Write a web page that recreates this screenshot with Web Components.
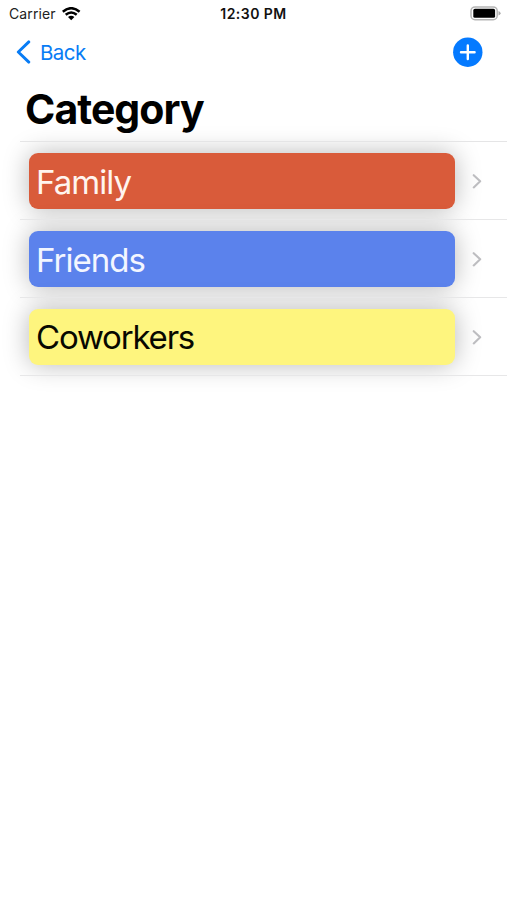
<!DOCTYPE html>
<html lang="en">
<head>
<meta charset="utf-8">
<title>Category</title>
<style>
    body {
        margin: 0;
        background: #fff;
        color: #000;
        font-family: Inter, "Liberation Sans", sans-serif;
    }
</style>
</head>
<body>
<category-screen>
    <status-bar carrier="Carrier">12:30 PM</status-bar>
    <nav-bar>Back</nav-bar>
    <large-title>Category</large-title>
    <category-list>
        <category-row style="--color-card: #d95b3a; --color-label: #fff5ef; --track: -0.95px">Family</category-row>
        <category-row style="--color-card: #5b82ec; --color-label: #f3f6ff; --track: -1px">Friends</category-row>
        <category-row style="--color-card: #fef57e; --color-label: #080800; --track: -1.2px; --leading: 56px">Coworkers</category-row>
    </category-list>
</category-screen>

<script>
function define(name, html) {
    const template = document.createElement('template');
    template.innerHTML = html;

    customElements.define(name, class extends HTMLElement {
        constructor() {
            super();

            this.attachShadow({mode: "open"});

            this.shadowRoot.appendChild(template.content.cloneNode(true));
        }

        connectedCallback() {
            const carrier = this.shadowRoot.querySelector('[data-carrier]');
            if (carrier) carrier.textContent = this.getAttribute('carrier');
        }
    });
}

define('category-screen', /*html*/ `
    <style>
        :host {
            display: flex;
            flex-direction: column;
            width: 507px;
            height: 900px;
            overflow: hidden;
        }
    </style>
    <slot></slot>
`);

define('status-bar', /*html*/ `
    <style>
        :host {
            display: grid;
            grid-template-columns: 1fr auto 1fr;
            align-items: center;
            box-sizing: border-box;
            height: 27px;
            padding: 0 6px 0 9px;
            line-height: 27px;
        }

        .status__carrier {
            display: flex;
            align-items: center;
            gap: 6px;
            font-size: 14px;
            letter-spacing: 0.1px;
            color: #222;
        }

        .status__time {
            margin-right: 3px;
            font-size: 14px;
            font-weight: 600;
            letter-spacing: 0.45px;
            color: #111;
        }

        .status__battery {
            justify-self: end;
        }

        svg {
            display: block;
        }
    </style>
    <div class="status__carrier">
        <span data-carrier></span>
        <svg width="19" height="14" viewBox="0 0 19 14" fill="none" stroke="#000" stroke-width="2.5">
            <path d="M.8 4.7Q9.2-2.3 17.6 4.7M3.7 7.8Q9.2 3.1 14.7 7.8"/>
            <path d="M6 10.1Q9.2 7.6 12.4 10.1L9.2 13.2Z" fill="#000" stroke="none"/>
        </svg>
    </div>
    <div class="status__time"><slot></slot></div>
    <svg class="status__battery" width="31" height="15" viewBox="0 0 31 15">
        <rect x="1" y=".9" width="26.2" height="12.8" rx="4" fill="#fff" stroke="#b5b5b5" stroke-width="1.5"/>
        <rect x="3.3" y="2.8" width="21.8" height="9" rx="1.6" fill="#000"/>
        <path d="M28.5 5Q30.6 5.8 30.6 7.3T28.5 9.6Z" fill="#aaa"/>
    </svg>
`);

define('nav-bar', /*html*/ `
    <style>
        :host {
            display: flex;
            align-items: center;
            justify-content: space-between;
            box-sizing: border-box;
            height: 50px;
            padding: 0 24px 0 16px;
            color: #087cf5;
        }

        .nav__back {
            display: flex;
            align-items: center;
            gap: 9px;
            font-size: 20.5px;
            letter-spacing: -0.55px;
        }

        svg {
            display: block;
        }
    </style>
    <div class="nav__back">
        <svg width="15" height="24" viewBox="0 0 15 24" fill="none" stroke="currentColor" stroke-width="2.9" stroke-linecap="round" stroke-linejoin="round">
            <path d="M12.8 1.9L2.3 12L12.8 22.1"/>
        </svg>
        <slot></slot>
    </div>
    <svg width="31" height="30" viewBox="0 0 31 30">
        <circle cx="15.8" cy="15.2" r="14.7" fill="#057aff"/>
        <path d="M9 15.2H22.6M15.8 8.4V22" stroke="#fff" stroke-width="2.4" stroke-linecap="round"/>
    </svg>
`);

define('large-title', /*html*/ `
    <style>
        :host {
            display: block;
            box-sizing: border-box;
            height: 64px;
            padding-left: 25px;
            font-size: 41px;
            font-weight: 700;
            line-height: 64px;
            letter-spacing: -0.95px;
        }
    </style>
    <slot></slot>
`);

define('category-list', /*html*/ `
    <style>
        :host {
            display: block;
            margin-left: 20px;
        }

        /* lines stay above the card shadows */
        .list__line {
            position: relative;
            z-index: 1;
            height: 1px;
            background: #e5e5e6;
        }
    </style>
    <div class="list__line"></div>
    <slot></slot>
`);

define('category-row', /*html*/ `
    <style>
        .row__content {
            display: flex;
            align-items: center;
            height: 77px;
            padding: 0 24px 0 9px;
        }

        .row__line {
            position: relative;
            z-index: 1;
            height: 1px;
            background: #e7e7e8;
        }

        :host {
            display: block;
        }

        .row__card {
            flex: none;
            box-sizing: border-box;
            width: 426px;
            height: 56px;
            padding-left: 7px;
            border-radius: 9px;
            background: var(--color-card);
            box-shadow: 0 0 26px rgba(0, 0, 0, 0.28);
            color: var(--color-label);
            font-size: 33px;
            line-height: var(--leading, 58px);
            letter-spacing: var(--track);
        }

        svg {
            display: block;
            margin-left: 16px;
        }
    </style>
    <div class="row__content">
        <div class="row__card"><slot></slot></div>
        <svg width="12" height="16" viewBox="0 0 12 16" fill="none" stroke="#bdbdc0" stroke-width="2.1" stroke-linecap="round" stroke-linejoin="round">
            <path d="M2.7 2.2L9.2 8.3L2.7 14.4"/>
        </svg>
    </div>
    <div class="row__line"></div>
`);
</script>
</body>
</html>
